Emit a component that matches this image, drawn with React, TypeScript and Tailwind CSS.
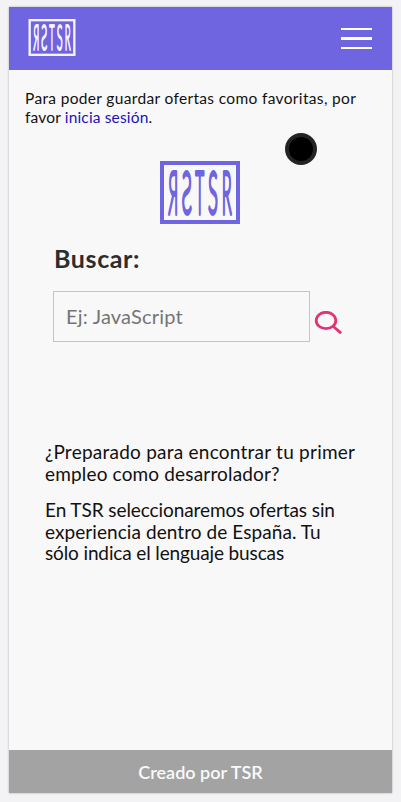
type LogoProps = { className: string; stroke: number };

const letters = [
  { char: 'R', left: 8, width: 10.5, mirrored: true },
  { char: 'S', left: 21, width: 11.5, mirrored: true },
  { char: 'T', left: 34, width: 11.5, mirrored: false },
  { char: 'S', left: 47.5, width: 11, mirrored: false },
  { char: 'R', left: 61.5, width: 10.5, mirrored: false },
];

const glyphWidth: Record<string, number> = { R: 38, S: 35, T: 44 };

function Logo({ className, stroke }: LogoProps) {
  return (
    <svg viewBox="0 0 80 63" className={`overflow-visible ${className}`} fill="currentColor" stroke="currentColor" aria-label="TSR">
      <rect x="2" y="2" width="76" height="59" fill="none" strokeWidth="4" />
      {letters.map((l, i) => {
        const sx = l.width / glyphWidth[l.char];
        return (
          <text
            key={i}
            transform={`translate(${l.left + l.width / 2} 53) scale(${l.mirrored ? -sx : sx} 1)`}
            textAnchor="middle"
            fontSize="59"
            strokeWidth={stroke}
            strokeLinejoin="round"
            vectorEffect="non-scaling-stroke"
            className="font-['Lato',sans-serif] font-light"
          >
            {l.char}
          </text>
        );
      })}
    </svg>
  );
}

export default function App() {
  return (
    <div className="h-[802px] w-[401px] bg-[#f3f3f5] pt-[7px] pl-[9px] font-['Lato',sans-serif] text-[#111]">
      <div className="relative flex h-[786px] w-[383px] flex-col bg-[#f8f8f8] shadow-[0_0_2px_#aaa]">
        <header className="flex h-[63px] shrink-0 items-center justify-between bg-[#7065e0] pr-[20px] pl-[19px]">
          <Logo stroke={1.6} className="mt-[-2px] h-[37px] w-[48px] text-[#f5f4ff]" />
          <div className="flex w-[31px] flex-col gap-[6.8px]">
            <span className="h-[2.5px] bg-white" />
            <span className="h-[2.5px] bg-white" />
            <span className="h-[2.5px] bg-white" />
          </div>
        </header>
        <p className="mt-[19px] ml-[16px] text-[15.5px] leading-[19px] whitespace-nowrap">
          <span className="block tracking-[0.34px]">Para poder guardar ofertas como favoritas, por</span>
          <span className="block tracking-[0.16px]">
            favor <a className="text-[#1a12b8]">inicia sesión</a>.
          </span>
        </p>
        <Logo stroke={2.8} className="mt-[34px] ml-[151px] h-[63px] w-[80px] shrink-0 text-[#7065e0]" />
        <h2 className="mt-[18px] ml-[45px] text-[25px] leading-[32px] font-bold tracking-[0.6px] text-[#2d2d2d]">Buscar:</h2>
        <div className="mt-[17px] ml-[44px] flex shrink-0">
          <input
            placeholder="Ej: JavaScript"
            className="h-[51px] w-[257px] border border-[#c4c4c4] bg-transparent px-[12px] pb-[1px] text-[20px] tracking-[0.2px] placeholder:text-[#757575]"
          />
          <svg viewBox="0 0 28 24" className="mt-[20px] ml-[4px] h-[24px] w-[28px]" fill="none" stroke="#e23475" strokeWidth="2.8" strokeLinecap="round">
            <ellipse cx="12" cy="9.5" rx="9.8" ry="8.2" />
            <path d="M19.3 15.5 26.2 21.4" />
          </svg>
        </div>
        <div className="mt-[99px] ml-[36px] text-[19px] leading-[22px] whitespace-nowrap">
          <p>
            <span className="block tracking-[0.24px]">¿Preparado para encontrar tu primer</span>
            <span className="block tracking-[0.16px]">empleo como desarrolador?</span>
          </p>
          <p className="mt-[14px] leading-[21.5px]">
            <span className="block tracking-[-0.08px]">En TSR seleccionaremos ofertas sin</span>
            <span className="block tracking-[0.07px]">experiencia dentro de España. Tu</span>
            <span className="block tracking-[-0.13px]">sólo indica el lenguaje buscas</span>
          </p>
        </div>
        <footer className="mt-auto flex h-[43px] shrink-0 items-center justify-center bg-[#a3a3a3] pt-[2px] text-[18px] font-semibold text-[#fafafa]">
          Creado por TSR
        </footer>
        <span className="absolute top-[126px] left-[276px] size-[32px] rounded-full border-[4px] border-[#222522] bg-black" />
      </div>
    </div>
  );
}
